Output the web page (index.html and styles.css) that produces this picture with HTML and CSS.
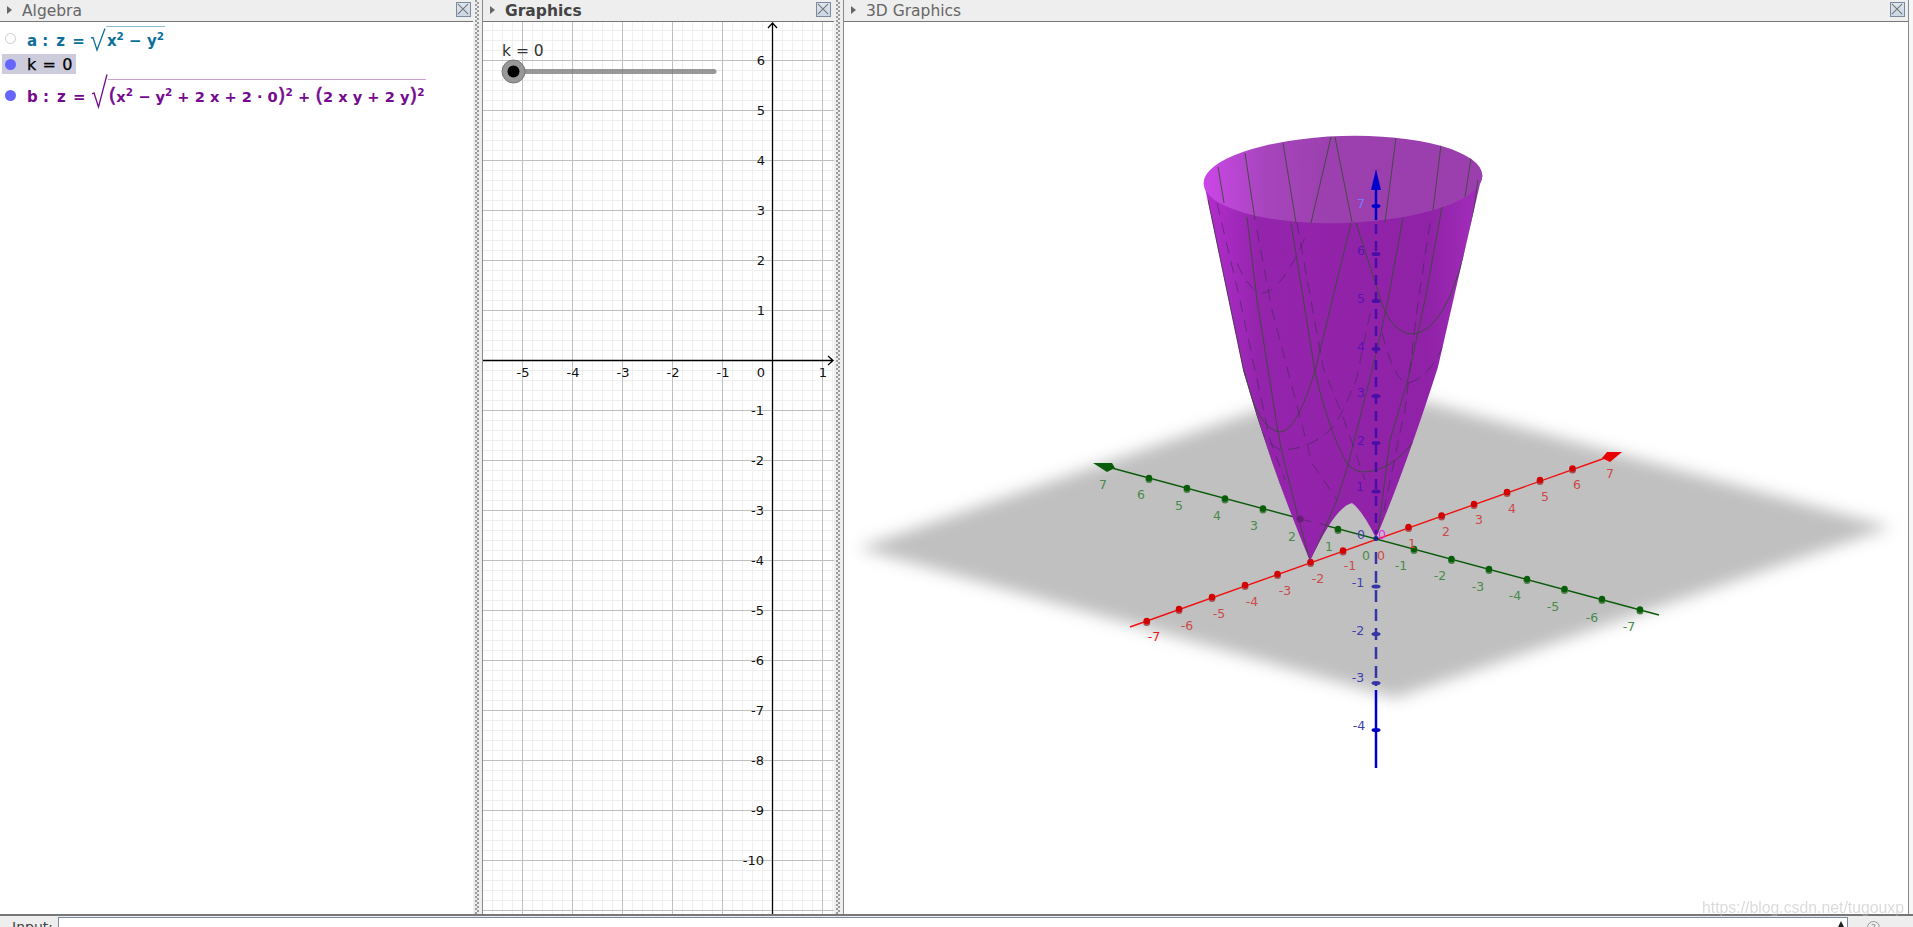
FILE: index.html
```html
<!DOCTYPE html>
<html lang="en">
<head>
<meta charset="utf-8">
<title>GeoGebra</title>
<link rel="stylesheet" href="styles.css">
</head>
<body>
<div class="app">
  <div class="views">
    <section class="panel algebra">
      <header class="head"><i class="tri"></i><span class="title">Algebra</span><button class="close"><svg width="15" height="14" viewBox="0 0 15 14"><path d="M2 1.5 13 12.5M13 1.5 2 12.5"/></svg></button></header>
      <div class="alg-list">
        <div class="row row-a">
          <span class="marble off"></span>
          <span class="math teal"><span class="lab">a :</span><span class="eq">z =</span>
            <svg class="rad" width="15" height="25" viewBox="0 0 15 25" preserveAspectRatio="none"><path d="M0 10 2 9.500 6 22 14 .5"/></svg>
            <span class="under">x<sup>2</sup> − y<sup>2</sup></span></span>
        </div>
        <div class="row row-k"><span class="marble on"></span><span class="kval">k = 0</span></div>
        <div class="row row-b">
          <span class="marble on"></span>
          <span class="math purple"><span class="lab">b :</span><span class="eq">z =</span>
            <svg class="rad" width="16" height="35" viewBox="0 0 16 35" preserveAspectRatio="none"><path d="M0 20 2 19 6.500 33 15 .5"/></svg>
            <span class="under"><span class="par">(</span>x<sup>2</sup> − y<sup>2</sup> + 2 x + 2 · 0<span class="par">)</span><sup>2</sup> + <span class="par">(</span>2 x y + 2 y<span class="par">)</span><sup>2</sup></span></span>
        </div>
      </div>
    </section>
    <div class="split"></div>
    <section class="panel graphics">
      <header class="head"><i class="tri"></i><span class="title active">Graphics</span><button class="close"><svg width="15" height="14" viewBox="0 0 15 14"><path d="M2 1.500 13 12.500M13 1.500 2 12.500"/></svg></button></header>
      <svg class="canvas" width="351" height="892" viewBox="483 22 351 892">
        <defs>
          <pattern id="grid" patternUnits="userSpaceOnUse" x="22" y="10" width="50" height="50">
            <path class="minor" d="M10.500 0V50M20.500 0V50M30.500 0V50M40.500 0V50M0 10.500H50M0 20.500H50M0 30.500H50M0 40.500H50"/>
            <path class="major" d="M.5 0V50M0 .5H50"/>
          </pattern>
        </defs>
        <rect x="483" y="22" width="351" height="892" fill="url(#grid)"/>
        <path class="axis" d="M772.500 914V23M768 28 772.500 23 777 28M483 360.500H833M828 356 833 360.500 828 365"/>
        <g class="tick-label mid">
          <text x="523" y="377">-5</text><text x="573" y="377">-4</text><text x="623" y="377">-3</text><text x="673" y="377">-2</text><text x="723" y="377">-1</text><text x="761" y="377">0</text><text x="823" y="377">1</text>
        </g>
        <g class="tick-label end">
          <text x="765" y="65">6</text><text x="765" y="115">5</text><text x="765" y="165">4</text><text x="765" y="215">3</text><text x="765" y="265">2</text><text x="765" y="315">1</text>
          <text x="764" y="415">-1</text><text x="764" y="465">-2</text><text x="764" y="515">-3</text><text x="764" y="565">-4</text><text x="764" y="615">-5</text><text x="764" y="665">-6</text><text x="764" y="715">-7</text><text x="764" y="765">-8</text><text x="764" y="815">-9</text><text x="764" y="865">-10</text>
        </g>
        <text class="slider-label" x="502" y="56">k = 0</text>
        <line class="track" x1="513" y1="71.500" x2="714" y2="71.500"/>
        <circle class="knob-out" cx="513.500" cy="71.500" r="11.500"/>
        <circle class="knob-in" cx="513.500" cy="71.500" r="6"/>
      </svg>
    </section>
    <div class="split"></div>
    <section class="panel three">
      <header class="head"><i class="tri"></i><span class="title">3D Graphics</span><button class="close"><svg width="15" height="14" viewBox="0 0 15 14"><path d="M2 1.500 13 12.500M13 1.500 2 12.500"/></svg></button></header>
      <svg class="canvas" width="1064" height="892" viewBox="844 22 1064 892">
        <defs>
          <filter id="soft" filterUnits="userSpaceOnUse" x="800" y="330" width="1108" height="420"><feGaussianBlur stdDeviation="8"/></filter>
          <clipPath id="shape">
            <path d="M1204 183 L1243 370 Q1270 465 1310 561 Q1335 507 1352 503 Q1362 510 1376 538 Q1405 470 1438 367 L1482 175 Z"/>
            <ellipse cx="1343" cy="179.500" rx="139.500" ry="43.500" transform="rotate(-1.700 1343 179.500)"/>
          </clipPath>
          <linearGradient id="bodyfill" gradientUnits="userSpaceOnUse" x1="1204" y1="0" x2="1482" y2="0">
            <stop offset="0" stop-color="#b32ecf"/><stop offset=".2" stop-color="#9424ac"/><stop offset=".8" stop-color="#8f22a6"/><stop offset="1" stop-color="#a42dbd"/>
          </linearGradient>
          <linearGradient id="capfill" gradientUnits="userSpaceOnUse" x1="1204" y1="0" x2="1482" y2="0">
            <stop offset="0" stop-color="#cb46e8"/><stop offset=".22" stop-color="#a745bd"/><stop offset=".45" stop-color="#9b40ae"/><stop offset="1" stop-color="#9b3eae"/>
          </linearGradient>
          <g id="rt"><circle class="rt-low" cy="1.500" r="3.500"/><circle class="rt-top" r="3.200"/></g>
          <g id="gt"><circle class="gt-low" cy="1.500" r="3.500"/><circle class="gt-top" r="3.200"/></g>
        </defs>

        <polygon class="plane" points="858,548 1345,380 1891,527 1395,698" filter="url(#soft)"/>

        <g class="axis-g">
          <line x1="1108" y1="467" x2="1659" y2="615"/>
          <polygon class="fill-g" points="1093,463 1112,463 1115,468 1107,472"/>
          <use href="#gt" x="1149" y="478"/><use href="#gt" x="1187" y="488"/><use href="#gt" x="1225" y="498.500"/><use href="#gt" x="1263" y="508.500"/><use href="#gt" x="1338" y="529"/><use href="#gt" x="1414" y="549"/><use href="#gt" x="1451.500" y="559"/><use href="#gt" x="1489" y="569"/><use href="#gt" x="1527" y="579"/><use href="#gt" x="1564.500" y="589"/><use href="#gt" x="1602" y="599"/><use href="#gt" x="1640" y="609.500"/>
        </g>
        <g class="axis-r">
          <line x1="1130" y1="627" x2="1608" y2="457"/>
          <polygon class="fill-r" points="1622,452 1607,452 1602,458 1610,462"/>
          <use href="#rt" x="1146.700" y="621"/><use href="#rt" x="1179" y="609"/><use href="#rt" x="1212" y="597"/><use href="#rt" x="1245" y="585"/><use href="#rt" x="1277.500" y="574"/><use href="#rt" x="1310.500" y="562"/><use href="#rt" x="1343" y="550.500"/><use href="#rt" x="1408.500" y="527"/><use href="#rt" x="1441.600" y="515.500"/><use href="#rt" x="1474" y="504"/><use href="#rt" x="1507" y="492"/><use href="#rt" x="1540" y="480"/><use href="#rt" x="1572.500" y="468.500"/>
        </g>

        <path class="surface" d="M1204 183 L1243 370 Q1270 465 1310 561 Q1335 507 1352 503 Q1362 510 1376 538 Q1405 470 1438 367 L1482 175 Z"/>
        <ellipse class="cap" cx="1343" cy="179.500" rx="139.500" ry="43.500" transform="rotate(-1.700 1343 179.500)"/>

        <g class="mesh" clip-path="url(#shape)">
          <path d="M1218 167 1224 203M1245 153 1255 220M1283 143 1296 223M1331 137 1311 223M1335 137 1352 222M1396 138 1385 222M1441 145 1433 210M1471 158 1465 197"/>
          <path d="M1208 200 1243 367 Q1268 460 1306 556"/>
          <path d="M1247 217 1257 300 1278 432 1283 457 1297 513 1310 561"/>
          <path d="M1291 223 1315 372 Q1330 435 1348 465 Q1356 472 1365 472 Q1395 470 1420 433"/>
          <path d="M1351 223 1316 367 Q1297 432 1280 432 Q1258 430 1243 370"/>
          <path d="M1356 223 1383 307 Q1395 334 1412 334 Q1432 334 1450 296 Q1470 250 1478 180"/>
          <path d="M1403 218 1388 300 1377 350 1367 390 1348 465 1337 500 1312 558"/>
          <path d="M1442 207 1425 300 1407 383 1390 440 1378 533"/>
        </g>
        <g class="mesh dashed" clip-path="url(#shape)">
          <path d="M1217 203 1240 300 1270 440 1285 480"/>
          <path d="M1257 230 1272 310 1312 463 1337 500"/>
          <path d="M1297 223 1323 367 1343 417 1365 480"/>
          <path d="M1370 313 1357 377 Q1345 410 1333 427 Q1310 450 1280 450 Q1260 440 1245 395"/>
          <path d="M1237 263 Q1250 293 1263 293 Q1283 290 1307 233"/>
          <path d="M1382 333 Q1395 383 1408 383 Q1432 378 1450 330"/>
          <path d="M1430 223 1417 310 1405 410 1397 447 1382 520"/>
          <path d="M1300 519 1330 526"/>
        </g>
        <circle class="dim-tick" cx="1300" cy="519" r="3.500"/>

        <g class="z-axis">
          <line class="z-solid" x1="1376" y1="190" x2="1376" y2="220"/>
          <polygon class="z-head" points="1376,169 1371,190 1381,190"/>
          <line class="z-in" x1="1376" y1="224" x2="1376" y2="534"/>
          <line class="z-out" x1="1376" y1="552" x2="1376" y2="686"/>
          <line class="z-solid" x1="1376" y1="690" x2="1376" y2="768"/>
          <ellipse class="z-blue" cx="1376" cy="206" rx="4.500" ry="2"/>
          <g class="z-vi"><ellipse cx="1376" cy="254" rx="4.500" ry="2"/><ellipse cx="1376" cy="301" rx="4.500" ry="2"/><ellipse cx="1376" cy="349" rx="4.500" ry="2"/><ellipse cx="1376" cy="396" rx="4.500" ry="2"/><ellipse cx="1376" cy="443" rx="4.500" ry="2"/><ellipse cx="1376" cy="491.500" rx="4.500" ry="2"/></g>
          <g class="z-nv"><ellipse cx="1376" cy="586.500" rx="4.500" ry="2"/><ellipse cx="1376" cy="634" rx="4.500" ry="2"/><ellipse cx="1376" cy="683" rx="4.500" ry="2"/></g>
          <ellipse class="z-blue" cx="1376" cy="730" rx="4.500" ry="2"/>
        </g>
        <circle class="origin" cx="1376" cy="538.500" r="2.500"/>

        <g class="lbl lbl-g">
          <text x="1103" y="489">7</text><text x="1141" y="499">6</text><text x="1179" y="510">5</text><text x="1217" y="520">4</text><text x="1254" y="530">3</text><text x="1292" y="541">2</text><text x="1329" y="551">1</text><text x="1366" y="560">0</text><text x="1401" y="570">-1</text><text x="1440" y="580">-2</text><text x="1478" y="591">-3</text><text x="1515" y="600">-4</text><text x="1553" y="611">-5</text><text x="1592" y="622">-6</text><text x="1629" y="631">-7</text>
        </g>
        <g class="lbl lbl-r">
          <text x="1610" y="478">7</text><text x="1577" y="489">6</text><text x="1545" y="501">5</text><text x="1512" y="513">4</text><text x="1479" y="524">3</text><text x="1446" y="536">2</text><text x="1412" y="548">1</text><text x="1381" y="560">0</text><text x="1350" y="570">-1</text><text x="1318" y="583">-2</text><text x="1285" y="595">-3</text><text x="1252" y="606">-4</text><text x="1219" y="618">-5</text><text x="1187" y="630">-6</text><text class="lbl-r-bright" x="1154" y="641">-7</text>
        </g>
        <g class="lbl lbl-v">
          <text x="1361" y="255">6</text><text x="1361" y="303">5</text><text x="1361" y="351">4</text><text x="1361" y="397">3</text><text x="1361" y="445">2</text><text x="1360" y="491">1</text>
        </g>
        <g class="lbl lbl-b">
          <text class="lbl-pale" x="1361" y="208">7</text><text x="1361" y="539">0</text><text x="1358" y="587">-1</text><text x="1358" y="635">-2</text><text x="1358" y="682">-3</text><text x="1359" y="730">-4</text>
        </g>
        <text class="lbl lbl-m" x="1382" y="539">0</text>
      </svg>
    </section>
    <div class="edge"></div>
  </div>
  <footer class="input-bar">
    <label class="input-label">Input:</label>
    <div class="input-box"><i class="up"></i></div>
    <div class="help"><span class="help-ring">?</span></div>
  </footer>
  <div class="mark">https://blog.csdn.net/tugouxp</div>
</div>
</body>
</html>
```
FILE: styles.css
```css
* { box-sizing: border-box; }
html, body { margin: 0; height: 100%; overflow: hidden; background: #fff; }
body { font-family: "DejaVu Sans", sans-serif; }

.app { position: relative; width: 1913px; height: 927px; display: flex; flex-direction: column; overflow: hidden; }
.views { display: flex; height: 914px; flex: none; }

.panel { display: flex; flex-direction: column; background: #fff; min-width: 0; }
.algebra { width: 473px; }
.graphics { width: 352px; border-left: 1px solid #8a8a8a; }
.three { width: 1066px; border-left: 1px solid #8a8a8a; border-right: 1px solid #8a8a8a; }
.edge { flex: 1; background: #f6f6f6; }

.head { height: 22px; flex: none; display: flex; align-items: center; background: #eee; border-bottom: 1px solid #777; padding: 0 3px 2px 7px; }
.algebra .head { padding-right: 2px; }
.tri { width: 0; height: 0; border-left: 5px solid #666; border-top: 4.5px solid transparent; border-bottom: 4.5px solid transparent; margin-right: 10px; flex: none; }
.title { font-size: 15.500px; color: #666; flex: 1; line-height: 20px; margin-top: 2px; }
.title.active { color: #444; font-weight: bold; font-size: 15.500px; }
.close { width: 15px; height: 15px; padding: 0; margin: 0; flex: none; background: linear-gradient(#dde6f0, #cbd6e5); border: 1px solid #7c8b9c; display: flex; }
.close svg { display: block; margin: -1px 0 0 -1px; }
.close path { stroke: #777; stroke-width: 1.200; fill: none; }

.split { width: 9px; flex: none; background-color: #eee; background-image: radial-gradient(circle at 1px 1px, #9a9a9a 0.8px, transparent 1px), radial-gradient(circle at 1px 1px, #9a9a9a 0.8px, transparent 1px); background-size: 4px 4px; background-position: 2px 0, 4px 2px; background-repeat: repeat-y; }

.canvas { display: block; flex: none; }

/* Algebra list */
.alg-list { padding: 1px 0 0 2px; display: flex; flex-direction: column; }
.row { display: flex; align-items: center; }
.row-a { height: 30px; }
.row-k { height: 20px; width: 74px; margin-top: 1px; background: #ccccdd; }
.row-b { height: 36px; margin-top: 3px; }
.row-b .math { margin-top: -10px; }
.marble { width: 11px; height: 11px; border-radius: 50%; margin: 0 11px 0 3px; flex: none; }
.marble.off { background: #fff; border: 1px solid #ccc; }
.marble.on { background: #6666ff; }
.kval { font-size: 16px; letter-spacing: .6px; color: #000; -webkit-text-stroke: .25px #000; }
.math { display: inline-flex; align-items: flex-end; font-weight: bold; font-size: 15px; white-space: pre; line-height: 20px; }
.teal { color: #0b6f99; }
.purple { color: #750a8e; }
.lab { margin-right: 8px; }
.eq { margin-right: 6px; word-spacing: 2px; }
.rad { flex: none; display: block; fill: none; stroke-width: 1.300; margin-bottom: -2px; }
.teal .rad { stroke: #0b6f99; }
.purple .rad { stroke: #750a8e; }
.under { border-top: 1.500px solid; padding: 4px 1px 0 1px; line-height: 20px; display: inline-block; }
.teal .under { border-color: #8fc0d2; }
.purple .under { border-color: #c99fd3; font-size: 14.600px; padding-top: 7px; }
.under sup { font-size: 10.500px; line-height: 0; vertical-align: 6px; }
.par { font-size: 20px; font-weight: normal; -webkit-text-stroke: .6px currentColor; line-height: 0; }

/* 2D canvas */
.minor { stroke: #efefef; stroke-width: 1; fill: none; }
.major { stroke: #c0c0c0; stroke-width: 1; fill: none; }
.axis { stroke: #000; stroke-width: 1.300; fill: none; }
.tick-label text { font-family: "DejaVu Sans", sans-serif; font-size: 13px; fill: #111; }
.mid text { text-anchor: middle; }
.end text { text-anchor: end; }
.slider-label { font-family: "DejaVu Sans", sans-serif; font-size: 15.500px; fill: #333; }
.track { stroke: #777; stroke-opacity: .75; stroke-width: 5; stroke-linecap: round; }
.knob-out { fill: #989898; stroke: #777; stroke-width: 1; }
.knob-in { fill: #000; }

/* 3D canvas */
.plane { fill: #c0c0c0; }
.axis-g line { stroke: #0a5a0a; stroke-width: 1.400; }
.axis-r line { stroke: #f01010; stroke-width: 1.400; }
.fill-g { fill: #0a5c0a; }
.fill-r { fill: #e80000; }
.rt-low { fill: #a85050; }
.rt-top { fill: #d40000; }
.gt-low { fill: #4d7f4d; }
.gt-top { fill: #075e07; }
.surface { fill: url(#bodyfill); }
.cap { fill: url(#capfill); }
.mesh path { fill: none; stroke: #3c4a3c; stroke-width: 1; stroke-opacity: .9; }
.mesh.dashed path { stroke: #3c2c50; stroke-opacity: .62; stroke-width: .9; stroke-dasharray: 12 8; }
.dim-tick { fill: #6a1d7a; }
.z-solid { stroke: #0000cc; stroke-width: 2.500; }
.z-head { fill: #0000cc; }
.z-in { stroke: #4a0ea8; stroke-width: 2.500; stroke-dasharray: 10 7; }
.z-out { stroke: #3535a8; stroke-width: 2.500; stroke-dasharray: 12 7; }
.z-blue { fill: #0000cc; }
.z-vi ellipse { fill: #4a0ea8; }
.z-nv ellipse { fill: #3535a8; }
.origin { fill: #0a2a8a; }
.lbl text, text.lbl { font-family: "DejaVu Sans", sans-serif; font-size: 12.500px; text-anchor: middle; }
.lbl-g text { fill: #4a8a4a; }
.lbl-r text { fill: #cc4a4a; }
.lbl-r .lbl-r-bright { fill: #f01818; }
.lbl-v text { fill: #5a12b4; }
.lbl-b text { fill: #4040b0; }
.lbl-b .lbl-pale { fill: #7a7aff; }
.lbl-m { fill: #f020f0; }

/* Input bar */
.input-bar { height: 13px; flex: none; display: flex; align-items: flex-start; background: #eee; border-top: 2px solid #777; overflow: hidden; position: relative; }
.input-label { width: 58px; padding: 3px 0 0 12px; font-size: 14px; line-height: 16px; color: #444; flex: none; }
.input-box { width: 1790px; height: 12px; margin-top: 1px; background: #fff; border: 1px solid #7c8b9c; border-bottom: 0; display: flex; justify-content: flex-end; padding-right: 3px; flex: none; }
.up { width: 0; height: 0; margin-top: 3px; border-bottom: 6px solid #222; border-left: 3.500px solid transparent; border-right: 3.500px solid transparent; }
.help { flex: 1; padding: 5px 0 0 19px; }
.help-ring { display: block; width: 13px; height: 13px; border: 1px solid #999; border-radius: 50%; font-size: 9px; line-height: 12px; text-align: center; color: #888; }

.mark { position: absolute; left: 1702px; top: 899px; font-family: "Liberation Sans", sans-serif; font-size: 15.800px; color: rgba(190, 190, 190, .55); white-space: nowrap; filter: blur(.4px); }
```
